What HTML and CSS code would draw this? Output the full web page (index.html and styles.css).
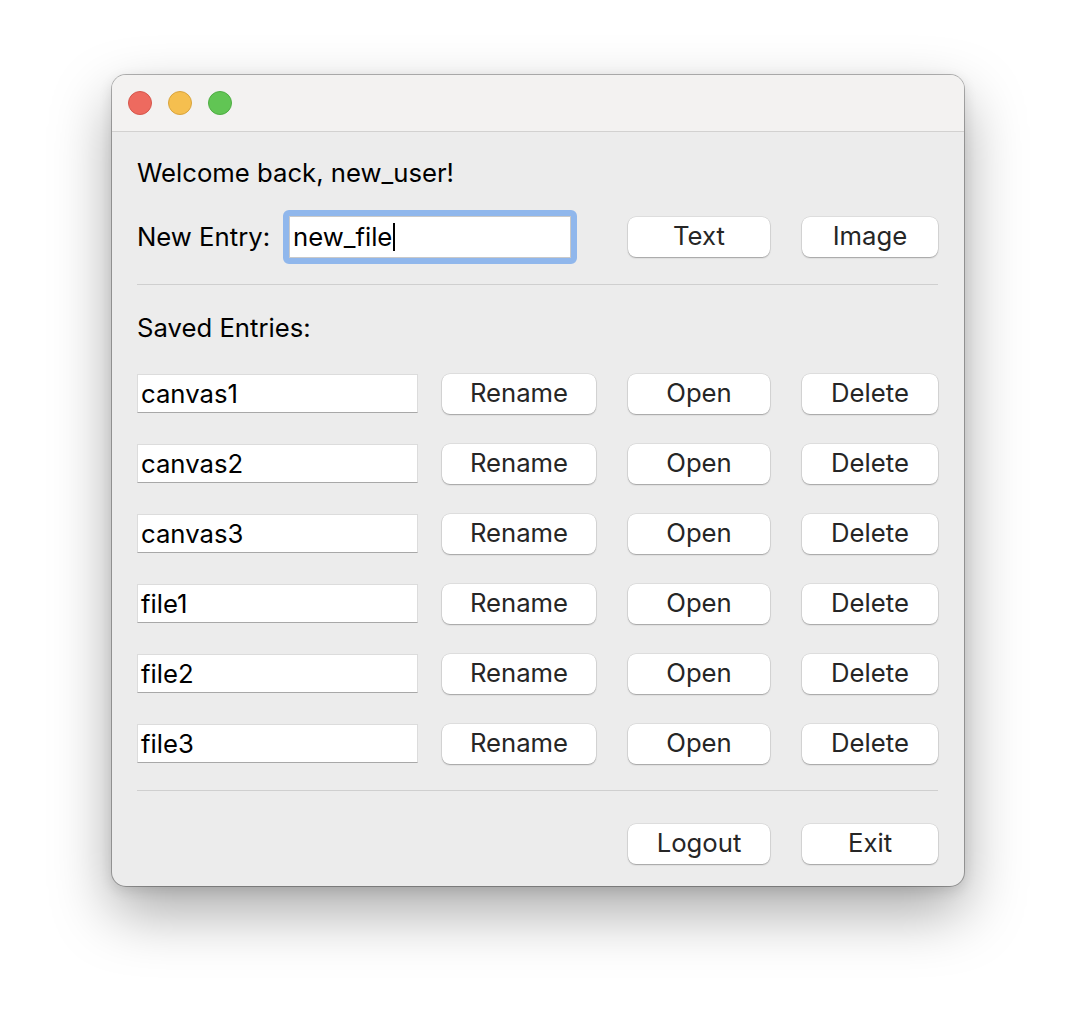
FILE: index.html
```html
<!DOCTYPE html>
<html>
<head>
<meta charset="utf-8">
<link rel="stylesheet" href="styles.css">
</head>
<body>
<div class="window">
  <div class="titlebar">
    <span class="light red"></span>
    <span class="light yellow"></span>
    <span class="light green"></span>
  </div>
  <div class="content">
    <div class="welcome">Welcome back, new_user!</div>
    <div class="grid new-row">
      <div class="new-entry">
        <span class="label">New Entry:</span>
        <div class="focus-ring"><div class="input">new_file<span class="caret"></span></div></div>
      </div>
      <button class="btn c3">Text</button>
      <button class="btn c4">Image</button>
    </div>
    <div class="sep sep1"></div>
    <div class="saved">Saved Entries:</div>
    <div class="grid rows">
      <div class="entry">canvas1</div><button class="btn c2">Rename</button><button class="btn c3">Open</button><button class="btn c4">Delete</button>
      <div class="entry">canvas2</div><button class="btn c2">Rename</button><button class="btn c3">Open</button><button class="btn c4">Delete</button>
      <div class="entry">canvas3</div><button class="btn c2">Rename</button><button class="btn c3">Open</button><button class="btn c4">Delete</button>
      <div class="entry">file1</div><button class="btn c2">Rename</button><button class="btn c3">Open</button><button class="btn c4">Delete</button>
      <div class="entry">file2</div><button class="btn c2">Rename</button><button class="btn c3">Open</button><button class="btn c4">Delete</button>
      <div class="entry">file3</div><button class="btn c2">Rename</button><button class="btn c3">Open</button><button class="btn c4">Delete</button>
    </div>
    <div class="sep sep2"></div>
    <div class="grid footer">
      <button class="btn c3">Logout</button>
      <button class="btn c4">Exit</button>
    </div>
  </div>
</div>
</body>
</html>
```

FILE: styles.css
```css
html, body {
  margin: 0;
  padding: 0;
  background: #ffffff;
}
body {
  width: 1076px;
  height: 1034px;
  overflow: hidden;
  padding: 75px 0 0 112px;
  box-sizing: border-box;
  font-family: Inter, "Liberation Sans", sans-serif;
  font-size: 25.7px;
  color: #000;
}
.window {
  width: 852px;
  height: 811px;
  background: #ececec;
  border-radius: 14px;
  box-shadow: 0 0 0 1px rgba(0,0,0,0.28), 0 26px 60px rgba(0,0,0,0.34), 0 4px 14px rgba(0,0,0,0.12);
  overflow: hidden;
  box-sizing: border-box;
}
.titlebar {
  height: 56px;
  background: #f3f2f1;
  border-bottom: 1px solid #d2d1d0;
  display: flex;
  align-items: center;
  padding-left: 16px;
  gap: 16px;
}
.light {
  width: 24px;
  height: 24px;
  border-radius: 50%;
  box-sizing: border-box;
}
.red { background: #ee6a5f; border: 1px solid #d6564c; }
.yellow { background: #f5bf4f; border: 1px solid #d9a43d; }
.green { background: #61c554; border: 1px solid #4ead43; }

.content {
  padding: 0 26px 0 25px;
}
.welcome {
  margin-top: 26px;
  height: 30px;
  line-height: 30px;
}
.grid {
  display: grid;
  grid-template-columns: 305px 186px 174px 136px;
}
.new-row {
  margin-top: 22px;
  height: 54px;
  align-items: center;
}
.new-entry {
  grid-column: 1 / 3;
  display: flex;
  align-items: center;
}
.label {
  width: 146px;
  line-height: 30px;
}
.focus-ring {
  width: 294px;
  height: 54px;
  box-sizing: border-box;
  border: 6px solid #90b7ec;
  border-radius: 6px;
  background: #fff;
}
.input {
  height: 42px;
  box-sizing: border-box;
  border: 1px solid #c9c9c9;
  background: #fff;
  padding-left: 3px;
  line-height: 40px;
  display: flex;
  align-items: center;
}
.caret {
  display: inline-block;
  width: 2px;
  height: 28px;
  background: #000;
  margin-left: 1px;
}
.btn {
  height: 40px;
  border: none;
  background: #fff;
  border-radius: 8px;
  box-shadow: 0 0 0 0.5px rgba(0,0,0,0.12), 0 1px 1.5px rgba(0,0,0,0.28);
  font-family: inherit;
  font-size: 25.7px;
  color: #262626;
  padding: 0 0 2px 0;
  line-height: 38px;
}
.c2 { width: 154px; grid-column: 2; }
.c3 { width: 142px; grid-column: 3; }
.c4 { width: 136px; grid-column: 4; }
.sep {
  height: 1px;
  background: #cfcfcf;
}
.sep1 { margin-top: 20px; }
.saved {
  margin-top: 28px;
  height: 30px;
  line-height: 30px;
}
.rows {
  margin-top: 31px;
  row-gap: 30px;
  grid-auto-rows: 40px;
}
.entry {
  width: 281px;
  height: 39px;
  box-sizing: border-box;
  background: #fff;
  border: 1px solid #dcdcdc;
  border-bottom: 1px solid #a8a8a8;
  padding-left: 3px;
  line-height: 38px;
  color: #000;
}
.sep2 { margin-top: 26px; }
.footer {
  margin-top: 33px;
}
```
